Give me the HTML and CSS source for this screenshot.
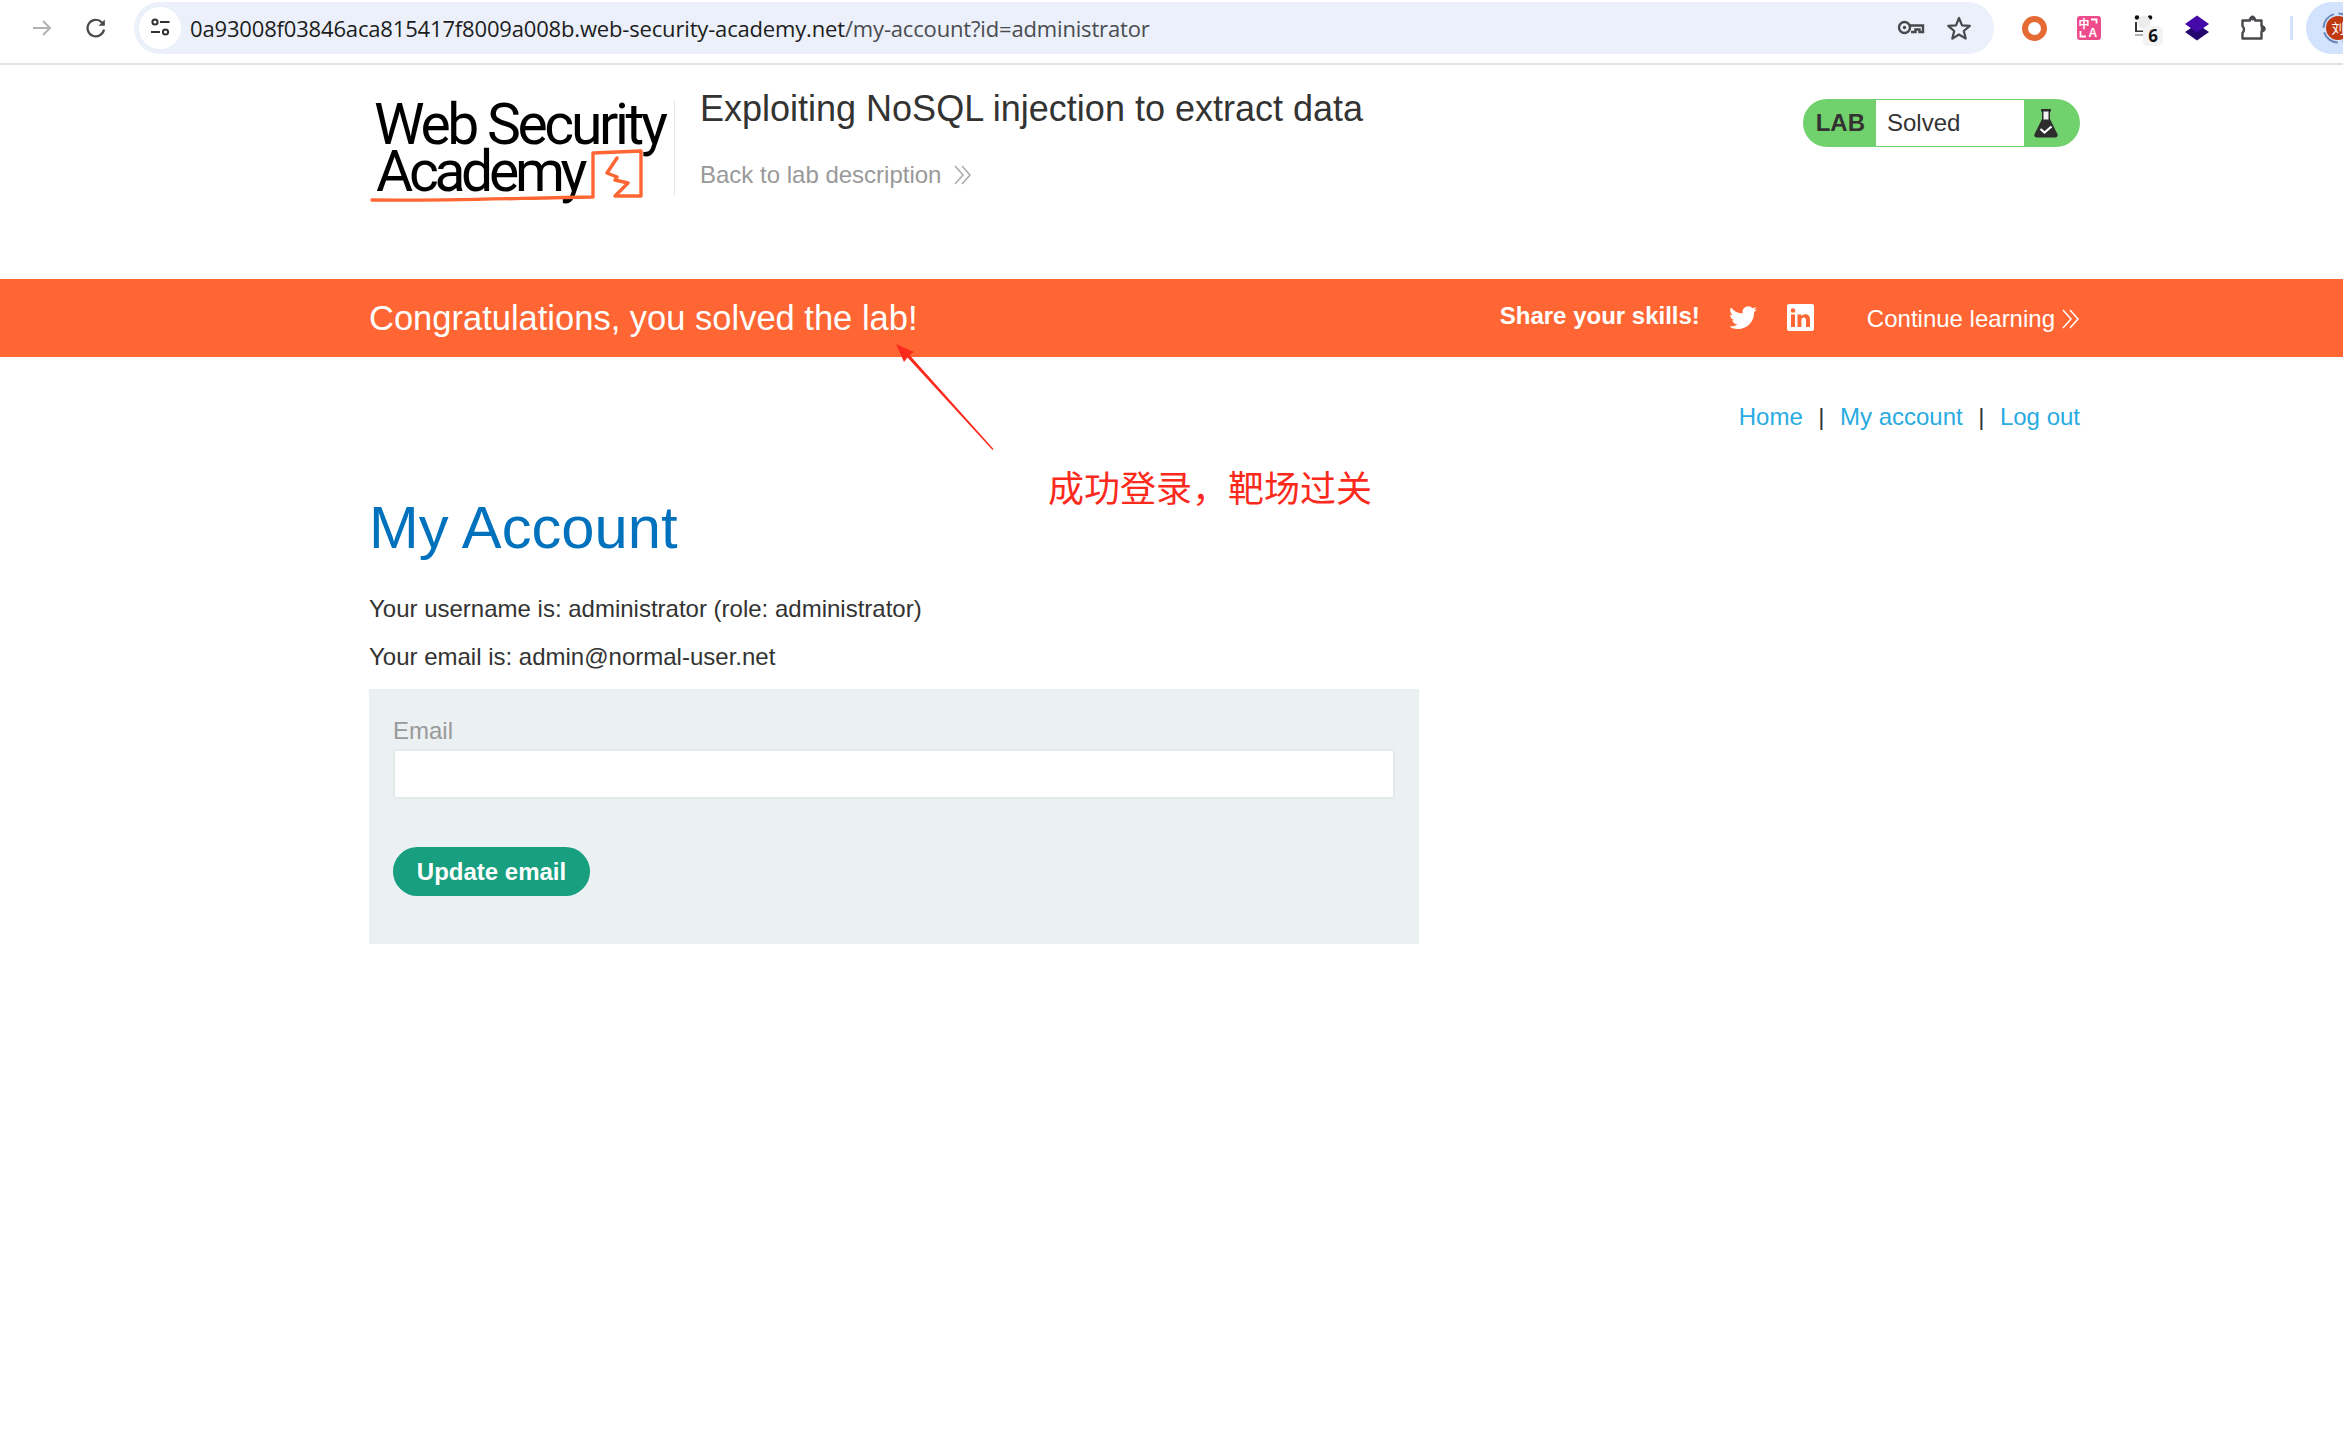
FILE: index.html
```html
<!DOCTYPE html>
<html lang="en">
<head>
<meta charset="utf-8">
<title>Exploiting NoSQL injection to extract data</title>
<link rel="stylesheet" href="styles.css">
</head>
<body>
<div class="toolbar">
  <svg class="tb-ico back" width="24" height="24" viewBox="0 0 24 24"><path d="M3 12h17M13 5l7 7-7 7" fill="none" stroke="#b0b2b4" stroke-width="2"/></svg>
  <svg class="tb-ico reload" width="24" height="24" viewBox="0 0 24 24"><path d="M20 13.500a8.300 8.300 0 1 1-2.300-7.300L20 8.700" fill="none" stroke="#47494c" stroke-width="2.200"/><path d="M20.800 3.500v6.300h-6.300z" fill="#47494c"/></svg>
  <div class="omnibox">
    <span class="tune"><svg width="24" height="24" viewBox="0 0 24 24"><g fill="none" stroke="#2f3134" stroke-width="2"><circle cx="7" cy="6" r="2.600"/><path d="M12 6h9.500M3 16h9"/><circle cx="17.500" cy="16" r="2.600"/></g></svg></span>
    <span class="url"><b>0a93008f03846aca815417f8009a008b.web-security-academy.net</b>/my-account?id=administrator</span>
    <svg class="key" width="28" height="18" viewBox="0 0 28 18"><g fill="none" stroke="#47494c" stroke-width="2.400"><circle cx="7.500" cy="8.500" r="5.500"/><path d="M13 6.500h13v6.500h-3.500v-2.500h-4v2.500H14"/></g><circle cx="7.500" cy="8.500" r="1.700" fill="#47494c"/></svg>
    <svg class="star" width="26" height="26" viewBox="0 0 26 26"><path d="M13 3l3 7.300 7.800.6-6 5.100 1.900 7.600L13 19.500l-6.700 4.100L8.200 16l-6-5.100 7.800-.6z" fill="none" stroke="#47494c" stroke-width="2.200" stroke-linejoin="round"/></svg>
  </div>
  <div class="ring"></div>
  <div class="ext-translate"><svg width="24" height="24" viewBox="0 0 24 24"><rect width="24" height="24" rx="3" fill="#ee4d8b"/><text x="1.500" y="12" class="tr-zh">中</text><text x="11.500" y="21" class="tr-en">A</text><path d="M14 3.500h5.500v4M3.500 15v5.500h5.500" fill="none" stroke="#fff" stroke-width="1.800"/></svg></div>
  <div class="ext-panda"><svg width="20" height="22" viewBox="0 0 20 22"><circle cx="3" cy="2.500" r="2.300" fill="#111"/><circle cx="16" cy="2.500" r="2.300" fill="#111"/><circle cx="10" cy="7" r="6.500" fill="#ececec"/><path d="M1 7h2v8.500h10V17H1z" fill="#333"/><path d="M1 20h10" stroke="#999" stroke-width="1.500"/></svg><span class="badge">6</span></div>
  <svg class="ext-layers" width="26" height="26" viewBox="0 0 26 26"><path d="M13 9l12 8-12 8.500L1 17z" fill="#24086e"/><path d="M13 .5L25 9l-12 8.500L1 9z" fill="#4309a9"/></svg>
  <svg class="puzzle" width="26" height="26" viewBox="0 0 26 26"><path d="M2.500 5.500h7.300a2.700 2.700 0 0 1 5.400 0h6.300v5.700a2.600 2.600 0 0 1 0 5.200v7.100H2.500v-5.700a4.400 4.400 0 0 0 0-6.600z" fill="none" stroke="#47494c" stroke-width="2.400" stroke-linejoin="round"/><circle cx="12.500" cy="3" r="2.500" fill="#47494c"/><circle cx="23.200" cy="13.800" r="2.500" fill="#47494c"/></svg>
  <div class="tb-divider"></div>
  <div class="profile">
    <span class="avatar">
      <svg class="avatar-ring" width="32" height="32" viewBox="0 0 32 32"><circle cx="16" cy="16" r="14.500" fill="none" stroke="#6a87b8" stroke-width="2" stroke-dasharray="18 4.800"/></svg>
      <span class="avatar-text">刘</span>
    </span>
  </div>
</div>

<div class="container header">
  <div class="logo">
    <div class="logo-line logo-web">Web Security</div>
    <div class="logo-line logo-academy">Academy</div>
    <svg class="logo-mark" width="290" height="115" viewBox="0 0 290 115"><path d="M3 105c70 1 150-2 221-3V58l48-2v45h-26l13-13-13-3 2-3-10-4 10-15" fill="none" stroke="#ff6633" stroke-width="3.400" stroke-linejoin="round" stroke-linecap="round"/></svg>
  </div>
  <div class="title-block">
    <h2 class="lab-title">Exploiting NoSQL injection to extract data</h2>
    <a class="back-link">Back to lab description<svg class="chev" width="18" height="20" viewBox="0 0 18 20"><path d="M1 1l8 9-8 9M8 1l8 9-8 9" fill="none" stroke="#a9a9a9" stroke-width="1.500"/></svg></a>
  </div>
  <div class="lab-status">
    <span class="lab-tag">LAB</span>
    <span class="lab-state">Solved</span>
    <span class="lab-flask"><svg width="24" height="30" viewBox="0 0 24 30"><path d="M8 2.500h8V11l7.400 15c.8 2-.2 3.500-2.200 3.500H2.800C.8 29.500-.2 28 .6 26L8 11z" fill="#2d2d2d"/><rect x="7" y="1" width="10" height="2.500" fill="#2d2d2d"/><rect x="9.500" y="3.500" width="5" height="8" fill="#f2f2f2"/><path d="M6.500 21l4 3.500 7-6" fill="none" stroke="#fff" stroke-width="2.200"/></svg></span>
  </div>
</div>

<div class="banner">
  <div class="container banner-inner">
    <span class="congrats">Congratulations, you solved the lab!</span>
    <span class="share">Share your skills!</span>
    <svg class="twitter" width="28" height="24" viewBox="0 0 24 20"><path d="M24 2.400a9.800 9.800 0 0 1-2.800.8A5 5 0 0 0 23.300.5a9.800 9.800 0 0 1-3.100 1.200 4.900 4.900 0 0 0-8.400 4.500A14 14 0 0 1 1.700.9a4.900 4.900 0 0 0 1.500 6.600 4.900 4.900 0 0 1-2.200-.6v.1a4.900 4.900 0 0 0 3.900 4.800 5 5 0 0 1-2.200.1 4.900 4.900 0 0 0 4.600 3.400A9.900 9.900 0 0 1 0 17.300 14 14 0 0 0 7.500 19.500c9.100 0 14-7.500 14-14v-.6A10 10 0 0 0 24 2.400z" fill="#fff"/></svg>
    <svg class="linkedin" width="27" height="27" viewBox="0 0 27 27"><rect width="27" height="27" rx="2" fill="#fff"/><g fill="#ff6633"><rect x="4" y="10.500" width="4" height="12.500"/><circle cx="6" cy="6.500" r="2.300"/><path d="M10.500 10.500h3.800v1.800c.8-1.300 2.200-2.100 4-2.100 3.500 0 4.700 2.200 4.700 5.700V23h-4v-6.300c0-1.700-.4-3.100-2.200-3.100-1.700 0-2.400 1.300-2.400 3.100V23h-3.900z"/></g></svg>
    <span class="continue">Continue learning<svg class="chev-w" width="18" height="20" viewBox="0 0 18 20"><path d="M1 1l8 9-8 9M8 1l8 9-8 9" fill="none" stroke="#fff" stroke-width="1.500"/></svg></span>
  </div>
</div>

<div class="container main">
  <nav class="top-links">
    <a>Home</a><span class="sep">|</span><a>My account</a><span class="sep">|</span><a>Log out</a>
  </nav>
  <h1>My Account</h1>
  <p class="info">Your username is: administrator (role: administrator)</p>
  <p class="info">Your email is: admin@normal-user.net</p>
  <form class="email-form">
    <label class="email-label">Email</label>
    <input class="email-input" type="email">
    <button class="update-btn" type="button">Update email</button>
  </form>
</div>

<svg class="arrow" width="110" height="120" viewBox="0 0 110 120"><path d="M4 4l18 8-4.500 3L101.500 109l-1 1L15.500 17.500 12 22z" fill="#fb2a1c"/></svg>
<div class="note">成功登录，靶场过关</div>
</body>
</html>
```

FILE: styles.css
```css
* { box-sizing: border-box; }
html, body { margin: 0; padding: 0; background: #fff; }
body {
  position: relative;
  width: 2343px;
  height: 1437px;
  overflow: hidden;
  font-family: "Liberation Sans", Arial, sans-serif;
  font-size: 24px;
  color: #333332;
}

/* browser toolbar */
.toolbar {
  display: flex;
  align-items: center;
  height: 65px;
  padding-bottom: 7px;
  padding-left: 30px;
  border-bottom: 2px solid #e2e2e2;
  background: #fff;
  overflow: hidden;
}
.tb-ico { flex: none; }
.back { margin-right: 30px; }
.reload { margin-right: 26px; }
.omnibox {
  flex: none;
  display: flex;
  align-items: center;
  width: 1860px;
  height: 52px;
  border-radius: 26px;
  background: #ebf0fa;
  padding-left: 5px;
}
.tune {
  width: 42px;
  height: 42px;
  flex: none;
  display: flex;
  align-items: center;
  justify-content: center;
  border-radius: 50%;
  background: #fff;
}
.url {
  margin-left: 9px;
  font-family: "Open Sans", "Noto Sans", sans-serif;
  font-size: 22px;
  letter-spacing: -0.165px;
  color: #4a4c50;
  white-space: nowrap;
}
.url b { font-weight: 400; color: #1c1d20; }
.key { margin-left: auto; flex: none; }
.star { margin-left: 21px; margin-right: 22px; flex: none; }
.ring {
  flex: none;
  width: 25px;
  height: 25px;
  margin-left: 28px;
  border: 6px solid #e66a34;
  border-radius: 50%;
}
.ext-translate { flex: none; width: 24px; height: 24px; margin-left: 30px; line-height: 0; }
.tr-zh { font: 700 11px "Noto Sans CJK SC", sans-serif; fill: #fff; }
.tr-en { font: 700 12px "Liberation Sans", sans-serif; fill: #fff; }
.ext-panda { flex: none; position: relative; width: 26px; height: 26px; margin-left: 33px; line-height: 0; }
.badge {
  position: absolute;
  left: 9px;
  top: 11px;
  width: 20px;
  height: 20px;
  background: #f3f3f3;
  border-radius: 5px;
  font: 700 17px/20px "Noto Sans", sans-serif;
  color: #111;
  text-align: center;
}
.ext-layers { flex: none; margin-left: 24px; }
.puzzle { flex: none; margin-left: 30px; }
.tb-divider { flex: none; width: 3px; height: 24px; margin-left: 24px; background: #d3e3fd; }
.profile {
  flex: none;
  width: 60px;
  height: 52px;
  margin-left: 13px;
  border-radius: 26px 0 0 26px;
  background: #d3e3fd;
  display: flex;
  align-items: center;
  padding-left: 16px;
}
.avatar {
  position: relative;
  flex: none;
  width: 32px;
  height: 32px;
  display: flex;
  align-items: center;
  justify-content: center;
}
.avatar-ring { position: absolute; left: 0; top: 0; }
.avatar-text {
  width: 24px;
  height: 24px;
  border-radius: 50%;
  background: #c0380f;
  color: #fff;
  font: 13px/24px "Noto Sans CJK SC", sans-serif;
  text-align: center;
}

/* container */
.container {
  width: 1711px;
  margin-left: 369px;
}

/* header */
.header {
  display: flex;
  align-items: flex-start;
  height: 214px;
  padding-top: 35px;
}
.logo {
  position: relative;
  flex: none;
  width: 306px;
  height: 96px;
  padding-top: 1px;
  border-right: 1px solid #e8e8e8;
  font-family: "Roboto", "Liberation Sans", sans-serif;
  font-weight: 450;
  color: #000;
  font-size: 57px;
}
.logo-line { line-height: 47px; white-space: nowrap; }
.logo-web { letter-spacing: -3.300px; padding-left: 5px; }
.logo-academy { letter-spacing: -4.300px; padding-left: 7px; }
.logo-mark { position: absolute; left: 0; top: -5px; }
.title-block { flex: none; margin-left: 25px; width: 1000px; }
.lab-title {
  margin: 0;
  font-size: 36px;
  font-weight: 400;
  line-height: 44px;
  margin-top: -19px;
  padding-top: 6px;
  color: #333332;
}
.back-link {
  display: flex;
  align-items: center;
  margin-top: 27px;
  color: #999;
  line-height: 34px;
}
.chev { margin-left: 13px; }
.lab-status {
  flex: none;
  display: flex;
  align-items: stretch;
  margin-left: auto;
  margin-top: -1px;
  width: 277px;
  height: 48px;
  border-radius: 24px;
  background: #70d16d;
  padding: 1px 0;
}
.lab-tag {
  width: 73px;
  flex: none;
  font-weight: 700;
  text-align: right;
  padding-right: 11px;
  line-height: 46px;
  color: #333332;
}
.lab-state {
  width: 148px;
  flex: none;
  background: #fff;
  padding-left: 11px;
  line-height: 46px;
}
.lab-flask { flex: none; display: flex; align-items: center; padding-left: 10px; }

/* banner */
.banner { height: 78px; background: #ff6633; color: #fff; }
.banner-inner { display: flex; align-items: center; height: 78px; }
.congrats { font-size: 34.500px; padding-top: 1px; }
.share { margin-left: auto; font-weight: 700; margin-top: -4px; }
.twitter { margin-left: 29px; flex: none; }
.linkedin { margin-left: 30px; flex: none; margin-top: -1px; }
.continue { margin-left: 53px; display: flex; align-items: center; padding-top: 1px; }
.chev-w { margin-left: 7px; }

/* main */
.main { padding-top: 43px; }
.top-links { display: flex; justify-content: flex-end; line-height: 34px; }
.top-links a { color: #29abe2; }
.sep { margin: 0 15.500px; }
h1 {
  margin: 59px 0 0;
  font-size: 59.700px;
  font-weight: 400;
  line-height: 70px;
  color: #0071bc;
}
.info { margin: 0; line-height: 34px; padding-top: 14px; }
.info:first-of-type { padding-top: 29px; }
.email-form {
  width: 1050px;
  height: 255px;
  margin-top: 15px;
  padding: 24px;
  background: #ebf0f2;
  display: flex;
  flex-direction: column;
  align-items: flex-start;
}
.email-label { color: #999; line-height: 36px; }
.email-input {
  display: block;
  width: 1002px;
  height: 50px;
  background: #fff;
  border: 2px solid #e6e9eb;
  border-radius: 2px;
}
.update-btn {
  margin-top: 48px;
  width: 197px;
  height: 49px;
  border: 0;
  border-radius: 25px;
  background: #189f80;
  color: #fff;
  font: 700 24px "Liberation Sans", sans-serif;
  padding: 0;
}

/* annotation */
.arrow { position: absolute; left: 892px; top: 340px; }
.note {
  position: absolute;
  left: 1048px;
  top: 462px;
  font-family: "Noto Sans CJK SC", sans-serif;
  font-size: 36px;
  line-height: 48px;
  color: #fb2a1c;
  white-space: nowrap;
}
```
